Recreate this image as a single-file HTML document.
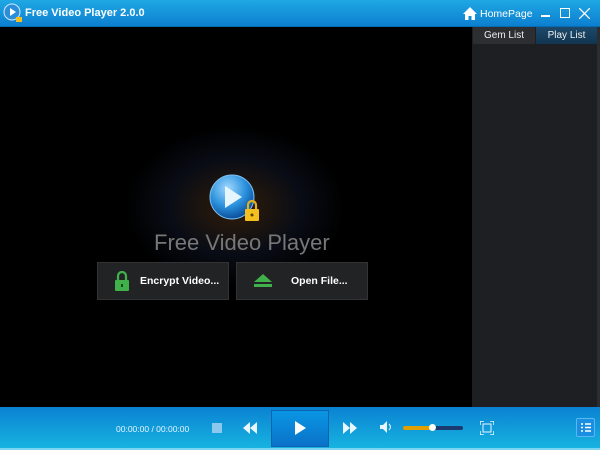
<!DOCTYPE html>
<html><head><meta charset="utf-8"><style>
*{margin:0;padding:0;box-sizing:border-box}
body{width:600px;height:450px;overflow:hidden;background:#000;font-family:"Liberation Sans",sans-serif;position:relative}
.title{position:absolute;left:0;top:0;width:600px;height:27px;background:linear-gradient(#1fa8e4,#0c7fd0);border-bottom:1px solid #0a6ab0}
.title .t{position:absolute;left:25px;top:7px;color:#fff;font-weight:bold;font-size:11px}
.main{position:absolute;left:0;top:27px;width:472px;height:380px;background:radial-gradient(ellipse 110px 80px at 235px 180px,rgba(110,65,20,.45),rgba(25,35,60,.35) 60%,#000 100%)}
.panel{position:absolute;left:472px;top:27px;width:128px;height:380px;background:#1d1f22;border-right:3px solid #2a2d31}
.tab{position:absolute;top:0;height:17px;font-size:10px;color:#eee;text-align:center;line-height:17px}
.btn{position:absolute;top:262px;width:132px;height:38px;background:#222324;border:1px solid #333;color:#fff;font-weight:bold;font-size:10.5px;line-height:36px}
.bar{position:absolute;left:0;top:407px;width:600px;height:43px;background:linear-gradient(#0a82d2,#17b3e0);border-bottom:2px solid #7dd5f2}
.ctl{position:absolute}
</style></head><body>
<div class="title">
<svg style="position:absolute;left:3px;top:3px" width="20" height="20"><circle cx="9" cy="9" r="8" fill="#2c8ed8" stroke="#cfeaff" stroke-width="1"/><path d="M7 5 L13 9 L7 13Z" fill="#fff"/><rect x="13" y="14" width="6" height="5" fill="#f3c020"/></svg>
<div class="t">Free Video Player 2.0.0</div>
<svg style="position:absolute;left:463px;top:7px" width="14" height="13"><path d="M7 0 L14 7 L12 7 L12 13 L8.5 13 L8.5 9 L5.5 9 L5.5 13 L2 13 L2 7 L0 7Z" fill="#fff"/></svg>
<div style="position:absolute;left:480px;top:8px;color:#fff;font-size:10.5px">HomePage</div>
<div style="position:absolute;left:541px;top:15px;width:9px;height:2px;background:#fff"></div>
<div style="position:absolute;left:560px;top:8px;width:10px;height:10px;border:1.5px solid #fff"></div>
<svg style="position:absolute;left:579px;top:8px" width="11" height="11"><path d="M0 0L11 11M11 0L0 11" stroke="#fff" stroke-width="1.3"/></svg>
</div>
<div class="main">
<svg style="position:absolute;left:208px;top:146px" width="56" height="52"><defs><radialGradient id="g" cx="40%" cy="30%" r="70%"><stop offset="0" stop-color="#9fd8ff"/><stop offset=".6" stop-color="#2a90dc"/><stop offset="1" stop-color="#0a4f9a"/></radialGradient></defs><circle cx="24" cy="24" r="22" fill="url(#g)" stroke="#7fbff0"/><path d="M17 13 L34 24 L17 35Z" fill="#e6f6ff"/><path d="M40 36 v-4 a4 4 0 0 1 8 0 v4" stroke="#e0b020" stroke-width="2.2" fill="none"/><rect x="37" y="36" width="14" height="12" rx="1" fill="#f3c020"/><circle cx="44" cy="42" r="1.5" fill="#5a4000"/></svg>
<div style="position:absolute;left:154px;top:203px;color:#777;font-size:22px">Free Video Player</div>
</div>
<div class="btn" style="left:97px"><svg style="position:absolute;left:17px;top:8px" width="14" height="20"><path d="M3 9 v-4 a4 4 0 0 1 8 0 v4" stroke="#3fb04a" stroke-width="2.3" fill="none"/><rect x="0" y="9" width="14" height="11" rx="1" fill="#3fb04a"/><rect x="6" y="13" width="2" height="3" fill="#1a4a1a"/></svg><span style="position:absolute;left:42px">Encrypt Video...</span></div>
<div class="btn" style="left:236px"><svg style="position:absolute;left:17px;top:11px" width="18" height="14"><path d="M9 0 L18 8 L0 8Z" fill="#3fb04a"/><rect x="0" y="10" width="18" height="3" fill="#3fb04a"/></svg><span style="position:absolute;left:54px">Open File...</span></div>
<div class="panel">
<div class="tab" style="left:1px;width:62px;background:#2c2e31">Gem List</div>
<div class="tab" style="left:64px;width:61px;background:linear-gradient(#1c4a6c,#123550)">Play List</div>
</div>
<div class="bar">
<div class="ctl" style="left:116px;top:17px;color:#e6f4ff;font-size:8.5px">00:00:00 / 00:00:00</div>
<div class="ctl" style="left:212px;top:16px;width:10px;height:10px;background:#8cc8ee"></div>
<svg class="ctl" style="left:243px;top:15px" width="14" height="12"><path d="M7 0 L0 6 L7 12Z M14 0 L7 6 L14 12Z" fill="#e8f6ff"/></svg>
<div class="ctl" style="left:271px;top:3px;width:58px;height:37px;background:linear-gradient(#0a96e4,#0a72c8);border:1px solid #0b64b0"></div>
<svg class="ctl" style="left:295px;top:14px" width="11" height="14"><path d="M0 0 L11 7 L0 14Z" fill="#fff"/></svg>
<svg class="ctl" style="left:343px;top:15px" width="14" height="12"><path d="M0 0 L7 6 L0 12Z M7 0 L14 6 L7 12Z" fill="#e8f6ff"/></svg>
<svg class="ctl" style="left:380px;top:14px" width="14" height="12"><path d="M0 4 H3 L7 0 V12 L3 8 H0Z" fill="#e8f6ff"/><path d="M9 3 Q12 6 9 9" stroke="#e8f6ff" fill="none"/></svg>
<div class="ctl" style="left:403px;top:19px;width:60px;height:4px;background:#1a3a70;border-radius:2px"></div>
<div class="ctl" style="left:403px;top:19px;width:30px;height:4px;background:#e0a000;border-radius:2px"></div>
<div class="ctl" style="left:429px;top:17px;width:7px;height:7px;background:#fff;border-radius:50%"></div>
<svg class="ctl" style="left:480px;top:14px" width="14" height="14"><path d="M0 4V0H4M10 0H14V4M14 10V14H10M4 14H0V10" stroke="#e8f6ff" stroke-width="1.5" fill="none"/><rect x="3" y="3" width="8" height="8" fill="none" stroke="#e8f6ff"/></svg>
<div class="ctl" style="left:576px;top:11px;width:19px;height:19px;background:#1a8ee0;border:1px solid #5ab8f0;border-radius:2px"></div>
<svg class="ctl" style="left:581px;top:16px" width="10" height="9"><path d="M0 1h2M4 1h6M0 4.5h2M4 4.5h6M0 8h2M4 8h6" stroke="#fff" stroke-width="1.4"/></svg>
</div>
</body></html>
